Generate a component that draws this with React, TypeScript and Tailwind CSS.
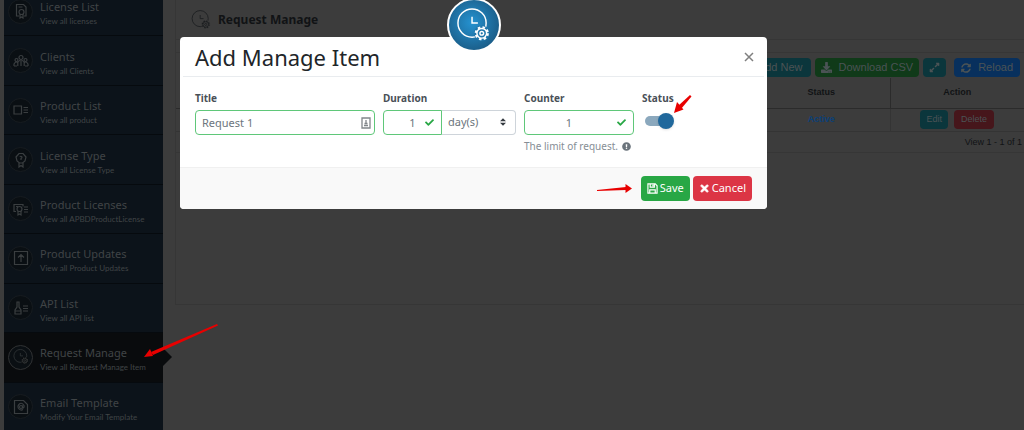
import React from 'react';
import { FaCheck, FaDownload, FaExclamationCircle, FaExpandAlt, FaSyncAlt, FaTimes } from 'react-icons/fa';

type MenuItem = { title: string; note: string; icon: React.ReactNode; active?: boolean };

const Cog = ({ x, y }: { x: number; y: number }) => (
  <g transform={`translate(${x} ${y})`}>
    <circle r="5" />
    <circle r="6.2" strokeWidth="2.2" strokeDasharray="2.6 2.27" />
    <circle r="1.9" />
  </g>
);

const ClockCog = ({ className, cogFill }: { className: string; cogFill: string }) => (
  <svg viewBox="0 0 34 36" className={className} fill="none" stroke="currentColor" strokeWidth="1.5">
    <circle cx="15.500" cy="15.500" r="14.500" />
    <path d="M15.500 9v6.500h6" />
    <circle cx="25.500" cy="26" r="8" fill={cogFill} stroke="none" />
    <Cog x={25.5} y={26} />
  </svg>
);

const Glyph = ({ children }: { children: React.ReactNode }) => (
  <svg viewBox="0 0 16 16" className="size-4" fill="none" stroke="currentColor" strokeWidth="1.2">{children}</svg>
);

const menu: MenuItem[] = [
  { title: 'License List', note: 'View all licenses', icon: <Glyph><path d="M6 13H3.500V1.500h7L13 4v9h-2M5.500 4h4" /><circle cx="8.500" cy="9" r="2.500" /><path d="M7 11v4l1.500-1 1.500 1v-4" /></Glyph> },
  { title: 'Clients', note: 'View all Clients', icon: <Glyph><circle cx="8" cy="4.500" r="2" /><circle cx="3.500" cy="7" r="1.500" /><circle cx="12.500" cy="7" r="1.500" /><path d="M4.800 13V9.500Q8 4.500 11.200 9.500V13M1 13v-2q2-3.500 4-1M15 13v-2q-2-3.500-4-1M8 8v5M1 13h3M12 13h3" /></Glyph> },
  { title: 'Product List', note: 'View all product', icon: <Glyph><path d="M1 4h7.500v8H1zM10.500 5.500H15M10.500 8H15M10.500 10.500H15" /></Glyph> },
  { title: 'License Type', note: 'View all License Type', icon: <Glyph><path d="M6 1.500h4l3 3.500-1 4-2.500 2h-3L4 9 3 5zM6 11v4l2-1.500 2 1.500v-4M6.800 5q1.200-1.500 2.200 0 0 1-1 1.500V8" /></Glyph> },
  { title: 'Product Licenses', note: 'View all APBDProductLicense', icon: <Glyph><path d="M3 10.500H1v-7h9v2M3 5.500h2M11 6h4M11 8.500h4M11 11h4" /><circle cx="6.500" cy="8" r="2.500" /><path d="M5 10v4l1.500-1L8 14v-4" /></Glyph> },
  { title: 'Product Updates', note: 'View all Product Updates', icon: <Glyph><path d="M1.500 1.500h13v13h-13zM8 12V5M5 7.500L8 4.500l3 3" /></Glyph> },
  { title: 'API List', note: 'View all API list', icon: <Glyph><path d="M4 2h2v5l2 3v4H2v-4l2-3zM2 11h6M10 6h5M10 8.500h5M10 11h5" /></Glyph> },
  { title: 'Request Manage', note: 'View all Request Manage Item', active: true, icon: <ClockCog className="size-4" cogFill="#090b0d" /> },
  { title: 'Email Template', note: 'Modify Your Email Template', icon: <Glyph><path d="M1.500 1.500h9l4 4v9h-13z" /><circle cx="8" cy="8" r="1.500" /><path d="M9.500 6.500v2.500q2 0 1.500-2.500-1.500-3-4-2-3 2-1.500 5 2 2.500 4.500 1" /></Glyph> },
];

const Sidebar = () => (
  <nav className="-mt-[13px] ml-1 grid h-[445px] w-[159px] shrink-0 auto-rows-fr self-start">
    {menu.map((item) => (
      <a
        key={item.title}
        href="#"
        className={`relative flex items-center gap-[7px] border-b border-[#060a0e] pl-1 ${item.active ? 'bg-[#090b0d]' : 'bg-[#0c131a]'}`}
      >
        <span className={`flex size-[25px] shrink-0 items-center justify-center rounded-full border bg-[#0a0f13] text-[#3a3e40] ${item.active ? 'border-[#303233]' : 'border-[#171c20]'}`}>
          {item.icon}
        </span>
        <span className="whitespace-nowrap pt-1 text-[#404446]">
          <span className="block text-[11px] leading-4">{item.title}</span>
          <span className="block font-[Lato] text-[8px] leading-3">{item.note}</span>
        </span>
        {item.active && (
          <svg viewBox="0 0 9 18" className="absolute left-full top-1/2 h-[18px] w-[9px] -translate-y-1/2" fill="#090b0d">
            <path d="M0 0l9 9-9 9z" />
          </svg>
        )}
      </a>
    ))}
  </nav>
);

const Panel = () => (
  <main className="ml-3 mb-[125px] flex min-w-0 flex-1 flex-col border-b border-l border-[#363636] text-[#111315]">
    <header className="flex h-10 items-center gap-[7px] border-b border-[#363636] pl-[15px]">
      <ClockCog className="size-5 text-[#1b1d1f]" cogFill="#3c3c3c" />
      <h1 className="text-[12px] font-bold">Request Manage</h1>
    </header>
    <div className="mt-3 flex h-[26px] items-center justify-end gap-1 border-t border-[#363636] pr-1 pt-1 font-['Liberation_Sans'] text-[11px] text-[#4b5355]">
      <button className="flex h-[19px] items-center rounded-sm bg-[#0b363c] px-2">Add New</button>
      <button className="flex h-[19px] items-center gap-[7px] rounded-sm bg-[#103a19] px-[6px]"><FaDownload className="size-[11px]" />Download CSV</button>
      <button aria-label="Expand" className="flex h-[19px] w-[23px] items-center justify-center rounded-sm bg-[#0b363c]"><FaExpandAlt className="size-[11px]" /></button>
      <button className="ml-1 flex h-[19px] items-center gap-[7px] rounded-sm bg-[#08305d] px-[7px]"><FaSyncAlt className="size-[10px]" />Reload</button>
    </div>
    <table className="w-full table-fixed border-collapse font-['Liberation_Sans'] text-[9px]">
      <colgroup><col /><col className="w-[137px]" /><col className="w-[134px]" /></colgroup>
      <thead>
        <tr className="h-[30px] border-b border-[#2b2b2b]">
          <td />
          <th className="border-r border-[#2b2b2b]">Status</th>
          <th>Action</th>
        </tr>
      </thead>
      <tbody>
        <tr className="h-[23px] border-b border-[#343434]">
          <td />
          <td className="border-r border-[#343434] text-center font-bold text-[#0b4078]">Active</td>
          <td>
            <div className="flex justify-center gap-[6px] text-[#4b5355]">
              <button className="h-[19px] rounded-sm bg-[#0b363c] px-[6px]">Edit</button>
              <button className="h-[19px] rounded-sm bg-[#46161b] px-[7px]">Delete</button>
            </div>
          </td>
        </tr>
      </tbody>
    </table>
    <p className="border-b border-[#363636] pr-[2px] text-right font-['Liberation_Sans'] text-[9px] leading-5">View 1 - 1 of 1</p>
  </main>
);

const field = 'block h-[25px] w-full border border-[#5fc779] bg-white text-[11px] text-[#6c757d] outline-none';
const label = 'mb-1 block text-[10px] font-bold leading-4 text-[#495057]';

const AddItemDialog = () => (
  <form role="dialog" aria-label="Add Manage Item" className="absolute left-[180px] right-[257px] top-[37px] rounded bg-white">
    <div className="absolute -top-[39px] left-1/2 flex size-[54px] -translate-x-1/2 items-center justify-center rounded-full border-2 border-white bg-radial-[at_45%_45%] from-[#2592d0] to-[#174b70] text-white">
      <ClockCog className="size-[35px]" cogFill="#1f76ab" />
    </div>
    <header className="mx-[3px] flex h-10 items-center justify-between border-b border-[#e9ecef] pl-3 pr-[10px]">
      <h2 className="text-[22px] leading-8 text-[#212529]">Add Manage Item</h2>
      <button type="button" aria-label="Close" className="text-[#7f7f7f]">
        <svg viewBox="0 0 10 10" className="size-[10px]" stroke="currentColor" strokeWidth="1.5"><path d="M1 1l8 8M9 1L1 9" /></svg>
      </button>
    </header>
    <div className="flex items-start gap-2 px-[15px] pb-[13px] pt-[13px]">
      <div className="min-w-0 flex-1">
        <label htmlFor="title" className={label}>Title</label>
        <div className="relative">
          <input id="title" defaultValue="Request 1" className={`${field} rounded-sm px-[6px]`} />
          <svg viewBox="0 0 10 12" className="absolute right-1 top-[7px] h-3 w-[10px]" fill="none" stroke="#81868a" strokeWidth="1.3">
            <path d="M1 1h8v10H1zM3 8.500h4M5 3v3M3.500 6.500h3" />
          </svg>
        </div>
      </div>
      <div className="w-[133px]">
        <label htmlFor="duration" className={label}>Duration</label>
        <div className="flex">
          <div className="relative w-[59px]">
            <input id="duration" defaultValue="1" className={`${field} rounded-l-sm px-5 text-center`} />
            <FaCheck className="absolute right-2 top-2 size-[9px] text-[#28a745]" />
          </div>
          <div className="relative flex-1">
            <select aria-label="Duration unit" className="block h-[25px] w-full appearance-none rounded-r-sm border border-l-0 border-[#ced4da] bg-white px-[6px] text-[11px] text-[#6c757d]">
              <option>day(s)</option>
            </select>
            <svg viewBox="0 0 4 5" className="pointer-events-none absolute right-[10px] top-2 h-2 w-[6px]" fill="#343a40"><path d="M2 0L0 2h4zm0 5L0 3h4z" /></svg>
          </div>
        </div>
      </div>
      <div className="w-[110px]">
        <label htmlFor="counter" className={label}>Counter</label>
        <div className="relative">
          <input id="counter" defaultValue="1" className={`${field} rounded-sm pl-[6px] pr-[26px] text-center`} />
          <FaCheck className="absolute right-2 top-2 size-[9px] text-[#28a745]" />
        </div>
        <p className="mt-[3px] flex items-center gap-1 whitespace-nowrap text-[10px] leading-4 text-[#868e96]">
          The limit of request. <FaExclamationCircle className="size-[9px] text-[#6c757d]" />
        </p>
      </div>
      <div className="w-[110px]">
        <label htmlFor="status" className={label}>Status</label>
        <input
          id="status"
          type="checkbox"
          role="switch"
          defaultChecked
          className="relative ml-[3px] mt-[10px] block h-[10px] w-7 appearance-none rounded-full bg-[#8ba8bd] after:absolute after:-right-px after:-top-[3px] after:size-4 after:rounded-full after:bg-[#20689c] after:shadow"
        />
      </div>
    </div>
    <footer className="flex justify-end gap-[3px] rounded-b border-t border-[#f0f0f0] bg-[#f9f9f9] px-[15px] py-2 text-[11px] text-white">
      <button type="submit" className="flex h-[25px] items-center gap-[2px] rounded-sm bg-[#28a745] px-[6px]">
        <svg viewBox="0 0 12 12" className="size-[11px]" fill="none" stroke="currentColor" strokeWidth="1.3">
          <path d="M1 1h8l2 2v8H1zM3.500 1v3.500h4.500V1M3 11V7.500h6V11M6.500 2v1.500" />
        </svg>
        Save
      </button>
      <button type="button" className="flex h-[25px] items-center gap-[2px] rounded-sm bg-[#dc3545] px-[6px]"><FaTimes className="size-[11px]" stroke="currentColor" strokeWidth="30" />Cancel</button>
    </footer>
  </form>
);

const Arrow = ({ className, viewBox, line, head }: { className: string; viewBox: string; line: string; head: string }) => (
  <svg viewBox={viewBox} className={`pointer-events-none absolute ${className}`} fill="#e80000" aria-hidden="true">
    <path d={line} />
    <path d={head} />
  </svg>
);

export default function App() {
  return (
    <div className="relative flex h-screen overflow-hidden bg-[#3c3c3c] font-['Noto_Sans',sans-serif]">
      <Sidebar />
      <Panel />
      <AddItemDialog />
      <Arrow className="left-[144px] top-[324px] h-[34px] w-[74px]" viewBox="0 0 74 34" line="M73 0l1 1.500L9 31 7 28z" head="M0 33l6-8 1.500 3.500 1.500 3.500z" />
      <Arrow className="left-[674px] top-[95px] h-[19px] w-[18px]" viewBox="0 0 18 19" line="M16 0l1.500 1.500L7 14l-3-3z" head="M0 18l3-11 6.500 7.500z" />
      <Arrow className="left-[597px] top-[184px] h-[10px] w-[35px]" viewBox="0 0 35 10" line="M0 6l29-3v3L0 7z" head="M35 4.500L28.500 0v9z" />
    </div>
  );
}
